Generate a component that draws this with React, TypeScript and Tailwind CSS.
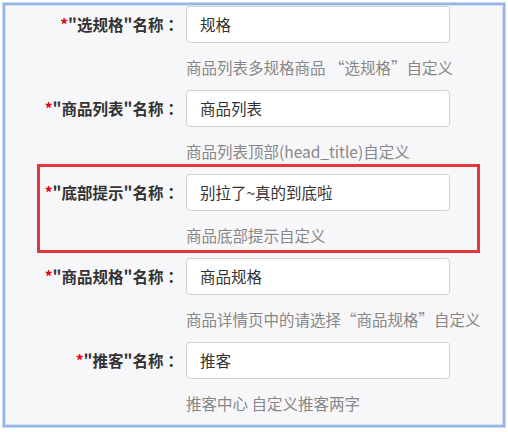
type Field = {
  name: string;
  value: string;
  hint: string;
  marked?: boolean;
};

const fields: Field[] = [
  { name: "选规格", value: "规格", hint: "商品列表多规格商品 “选规格”自定义" },
  { name: "商品列表", value: "商品列表", hint: "商品列表顶部(head_title)自定义" },
  { name: "底部提示", value: "别拉了~真的到底啦", hint: "商品底部提示自定义", marked: true },
  { name: "商品规格", value: "商品规格", hint: "商品详情页中的请选择“商品规格”自定义" },
  { name: "推客", value: "推客", hint: "推客中心 自定义推客两字" },
];

const FieldRow = ({ field }: { field: Field }) => {
  return (
    <div className="relative flex h-[84px] items-start">
      {field.marked && (
        <span className="absolute left-[32px] top-[-10px] h-[89px] w-[443px] border-[3px] border-[#e2373d]" />
      )}
      <label className="flex h-[37px] w-[174px] shrink-0 items-center justify-end text-[15.5px] font-bold text-[#333]">
        <span className="text-[#e60012]">*</span>
        <span>"{field.name}"名称</span>
        <span lang="zh-TW" style={{ fontFamily: '"Noto Sans CJK TC", sans-serif' }}>
          ：
        </span>
      </label>
      <div className="ml-[7px] flex flex-col">
        <div className="flex h-[37px] w-[264px] items-center rounded-[4px] border border-[#d2d2d2] bg-white px-[13px] text-[15.5px] text-[#333]">
          {field.value}
        </div>
        <div className="mt-[14px] whitespace-nowrap text-[15.5px] leading-[20px] text-[#878787]">
          {field.hint}
        </div>
      </div>
    </div>
  );
};

export default function App() {
  return (
    <div
      lang="zh-CN"
      className="h-[432px] w-[508px] bg-white pl-[3px] pt-[3px]"
      style={{ fontFamily: '"Noto Sans CJK SC", "Liberation Sans", sans-serif' }}
    >
      <div className="h-[424px] w-[502px] border-2 border-[#95b5e5] bg-[#f7f7f9] pt-[1px] shadow-[0_0_0_1px_#c6d8f3,inset_0_0_0_1px_#d3e1f6]">
        {fields.map((field) => (
          <FieldRow key={field.name} field={field} />
        ))}
      </div>
    </div>
  );
}
